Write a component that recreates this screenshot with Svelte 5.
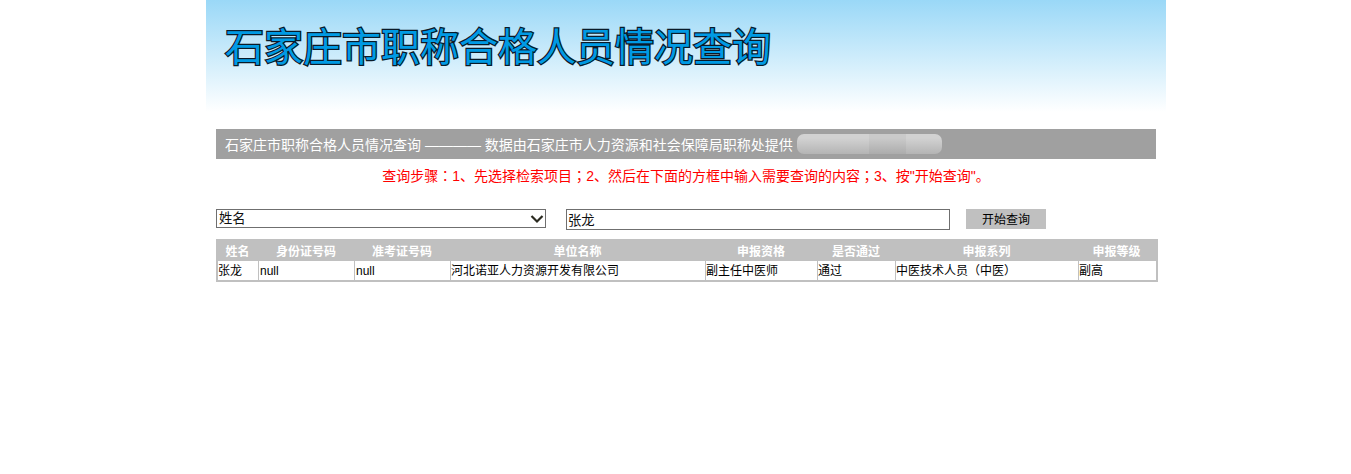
<script>
  const headers = ['姓名', '身份证号码', '准考证号码', '单位名称', '申报资格', '是否通过', '申报系列', '申报等级'];
  const row = ['张龙', 'null', 'null', '河北诺亚人力资源开发有限公司', '副主任中医师', '通过', '中医技术人员（中医）', '副高'];
  const widths = [41, 96, 96, 255, 112, 78, 183, 77];
</script>

<div class="page">
  <header class="banner">
    <h1>石家庄市职称合格人员情况查询</h1>
  </header>

  <div class="notice">
    <span>石家庄市职称合格人员情况查询 ———— 数据由石家庄市人力资源和社会保障局职称处提供</span>
    <span class="blur"><i></i><i></i><i></i><i></i></span>
  </div>

  <p class="steps">查询步骤<span class="mid">：</span>1、先选择检索项目<span class="mid">；</span>2、然后在下面的方框中输入需要查询的内容<span class="mid">；</span>3、按"开始查询"。</p>

  <form class="search" onsubmit={(e) => e.preventDefault()}>
    <div class="select">
      <span>姓名</span>
      <svg width="16" height="10" viewBox="0 0 16 10"><path d="M2.5 2l5.5 5.5 5.5-5.5" fill="none" stroke="#2a2a20" stroke-width="2.2"/></svg>
    </div>
    <input value="张龙" />
    <button type="submit">开始查询</button>
  </form>

  <table>
    <colgroup>
      {#each widths as w}<col style="width:{w}px" />{/each}
    </colgroup>
    <thead>
      <tr>{#each headers as h}<th>{h}</th>{/each}</tr>
    </thead>
    <tbody>
      <tr>{#each row as c}<td>{c}</td>{/each}</tr>
    </tbody>
  </table>
</div>

<style>
  :global(body) {
    margin: 0;
    background: #fff;
  }
  .page {
    width: 960px;
    height: 474px;
    margin-left: 206px;
    font-family: "Liberation Sans", "Noto Sans CJK SC", sans-serif;
    overflow: hidden;
  }
  .banner {
    height: 112px;
    padding: 17px 0 0 19px;
    box-sizing: border-box;
    background: linear-gradient(#9ad8f7, #fff);
  }
  h1 {
    margin: 0;
    font-family: "Noto Sans CJK SC", sans-serif;
    font-size: 39px;
    line-height: 54px;
    font-weight: 400;
    color: #009ae4;
    -webkit-text-stroke: 2.5px #0a1a28;
    paint-order: stroke fill;
    white-space: nowrap;
  }
  .notice {
    display: flex;
    align-items: center;
    gap: 4px;
    height: 30px;
    margin: 17px 10px 0;
    padding-left: 9px;
    background: #a0a0a0;
    color: #fff;
    font-size: 14px;
    white-space: nowrap;
  }
  .blur {
    display: flex;
    width: 145px;
    height: 20px;
    border-radius: 7px;
    overflow: hidden;
  }
  .blur i {
    flex: 1;
    background: linear-gradient(#d2d2d2 20%, #b4b4b4);
  }
  .blur i:nth-child(3) {
    background: linear-gradient(#cacaca 20%, #acacac);
  }
  .steps {
    margin: 6px 0 0;
    color: #f00;
    font-size: 14px;
    line-height: 20px;
    text-align: center;
  }
  .mid {
    font-family: "Noto Sans CJK TC", sans-serif;
  }
  .search {
    display: flex;
    align-items: flex-start;
    margin: 23px 10px 0;
  }
  .select {
    display: flex;
    align-items: center;
    justify-content: space-between;
    box-sizing: border-box;
    width: 330px;
    height: 19px;
    padding: 0 0 0 2px;
    border: 1px solid #6f6f6f;
    font-size: 13.33px;
    line-height: 16px;
    color: #111;
  }
  input {
    box-sizing: border-box;
    width: 384px;
    height: 21px;
    margin-left: 20px;
    padding: 1px 1px;
    border: 1px solid #6f6f6f;
    border-radius: 0;
    font: 13.33px "Noto Sans CJK SC", sans-serif;
    color: #111;
  }
  button {
    width: 80px;
    height: 20px;
    margin-left: 16px;
    padding: 0 0 2px;
    border: 0;
    background: #c0c0c0;
    font: 12px "Noto Sans CJK SC", sans-serif;
    color: #000;
  }
  table {
    table-layout: fixed;
    box-sizing: border-box;
    width: 942px;
    margin: 9px 0 0 10px;
    border-collapse: separate;
    border-spacing: 0;
    background: #c0c0c0;
    border: solid #c0c0c0;
    border-width: 0 2px 2px 2px;
    font-size: 12px;
  }
  th {
    height: 22px;
    padding: 0 2px 0 0;
    color: #fff;
    font-weight: 700;
    text-align: center;
    font-family: "Noto Sans CJK SC", sans-serif;
  }
  td {
    height: 19px;
    padding: 0;
    background: #fff;
    border-right: 1px solid #c0c0c0;
    color: #000;
    white-space: nowrap;
    line-height: 18px;
  }
  td:nth-child(2),
  td:nth-child(3) {
    padding-left: 1px;
  }
  td:last-child {
    border-right: 0;
  }
</style>
